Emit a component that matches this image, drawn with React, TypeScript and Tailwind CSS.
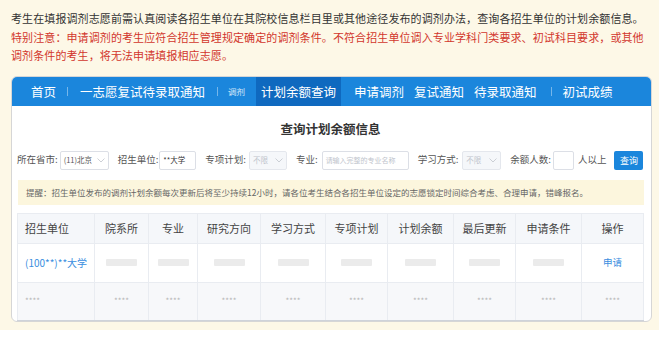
import React from "react";

const font = { fontFamily: '"Noto Sans CJK SC", "Noto Sans", sans-serif' };

function Chevron() {
  return (
    <svg width="8" height="5" viewBox="0 0 8 5" className="ml-auto">
      <path d="M0.5 0.5 L4 4 L7.5 0.5" fill="none" stroke="#c0c4cc" strokeWidth="0.8" />
    </svg>
  );
}

function Sep({ cls }: { cls: string }) {
  return <span className={`block w-px h-[9px] bg-white/40 ${cls}`} />;
}

const cols = [77, 54, 49, 63, 65, 62, 66, 62, 66, 62];
const heads = ["招生单位", "院系所", "专业", "研究方向", "学习方式", "专项计划", "计划余额", "最后更新", "申请条件", "操作"];

export default function App() {
  return (
    <div style={font} className="w-[659px] h-[341px] bg-white">
      <div className="h-[330px] bg-[#fdf8e7] pl-[11px] pr-[7px] pt-[9px]">
        <div className="text-[11px] leading-[18.5px] tracking-[0.1px]">
          <div className="text-[#333]">考生在填报调剂志愿前需认真阅读各招生单位在其院校信息栏目里或其他途径发布的调剂办法，查询各招生单位的计划余额信息。</div>
          <div className="text-[#d2362c]">特别注意：申请调剂的考生应符合招生管理规定确定的调剂条件。不符合招生单位调入专业学科门类要求、初试科目要求，或其他</div>
          <div className="text-[#d2362c]">调剂条件的考生，将无法申请填报相应志愿。</div>
        </div>

        <div className="mt-[11px] w-[641px] bg-white border border-[#d6d6d6] rounded-[6px] overflow-hidden">
          <div className="h-[29px] bg-[#1b86dc] flex items-center pl-[19px] text-white text-[12.5px] leading-[29px]">
            <span>首页</span>
            <Sep cls="ml-[11px]" />
            <span className="ml-[12px]">一志愿复试待录取通知</span>
            <Sep cls="ml-[12px]" />
            <span className="ml-[10px] text-[8.5px] text-white/80">调剂</span>
            <span className="ml-[11px] px-[5px] bg-[#0f69bf]">计划余额查询</span>
            <span className="ml-[13px]">申请调剂</span>
            <span className="ml-[10px]">复试通知</span>
            <span className="ml-[10px]">待录取通知</span>
            <Sep cls="ml-[14px]" />
            <span className="ml-[11px]">初试成绩</span>
          </div>

          <div className="pl-[5px] pr-[7px]">
            <div className="mt-[15px] text-center text-[12.5px] leading-[16px] font-bold text-[#333]">查询计划余额信息</div>

            <div className="mt-[14px] h-[19px] flex items-center text-[9.5px] text-[#555] leading-none">
              <span>所在省市:</span>
              <div className="ml-[2px] w-[49px] h-[19px] border border-[#dcdfe6] rounded-[2px] flex items-center px-[3px] text-[7.5px] text-[#555]">
                <span>(11)北京</span>
                <Chevron />
              </div>
              <span className="ml-[9px]">招生单位:</span>
              <div className="ml-[1px] w-[37px] h-[19px] border border-[#dcdfe6] rounded-[2px] flex items-center px-[3px] text-[7.5px] text-[#333]">**大学</div>
              <span className="ml-[9px]">专项计划:</span>
              <div className="ml-[3px] w-[38px] h-[19px] border border-[#e4e7ed] bg-[#f5f7fa] rounded-[2px] flex items-center px-[3px] text-[7.5px] text-[#c0c4cc]">
                <span>不限</span>
                <Chevron />
              </div>
              <span className="ml-[9px]">专业:</span>
              <div className="ml-[4px] w-[87px] h-[19px] border border-[#dcdfe6] rounded-[2px] flex items-center px-[3px] text-[7px] text-[#c0c4cc] whitespace-nowrap overflow-hidden">请输入完整的专业名称</div>
              <span className="ml-[9px]">学习方式:</span>
              <div className="ml-[4px] w-[39px] h-[19px] border border-[#e4e7ed] bg-[#f5f7fa] rounded-[2px] flex items-center px-[3px] text-[7.5px] text-[#c0c4cc]">
                <span>不限</span>
                <Chevron />
              </div>
              <span className="ml-[9px]">余额人数:</span>
              <div className="ml-[2px] w-[21px] h-[19px] border border-[#dcdfe6] rounded-[2px]" />
              <span className="ml-[4px]">人以上</span>
              <div className="ml-[8px] w-[29px] h-[19px] bg-[#1b86dc] rounded-[2px] text-white text-[9px] flex items-center justify-center">查询</div>
            </div>

            <div className="mt-[10px] ml-[1px] h-[25px] bg-[#fcf6dd] flex items-center pl-[8px] text-[8.5px] text-[#666] whitespace-nowrap">
              提醒：招生单位发布的调剂计划余额每次更新后将至少持续12小时，请各位考生结合各招生单位设定的志愿锁定时间综合考虑、合理申请，错峰报名。
            </div>

            <table className="mt-[8px] table-fixed border-collapse w-[626px]">
              <colgroup>
                {cols.map((w, i) => (
                  <col key={i} style={{ width: w }} />
                ))}
              </colgroup>
              <thead>
                <tr className="h-[30px] bg-[#f5f7fa]">
                  {heads.map((h, i) => (
                    <th
                      key={i}
                      className={`border border-[#e9ecf1] text-[11px] font-normal text-[#444] ${i === 0 ? "text-left pl-[7px]" : "text-center"}`}
                    >
                      {h}
                    </th>
                  ))}
                </tr>
              </thead>
              <tbody>
                <tr className="h-[39px] bg-white">
                  <td className="border border-[#e9ecf1] pl-[7px] text-[10px] text-[#3a8ee0] whitespace-nowrap">(100**)**大学</td>
                  {cols.slice(1, 9).map((_, i) => (
                    <td key={i} className="border border-[#e9ecf1]">
                      <div className="mx-auto w-[31px] h-[7px] bg-[#ebebeb] rounded-[1px] blur-[0.5px]" />
                    </td>
                  ))}
                  <td className="border border-[#e9ecf1] text-center text-[9.5px] text-[#3a8ee0]">申请</td>
                </tr>
                <tr className="h-[38px] bg-[#f7f8fa]">
                  {heads.map((_, i) => (
                    <td
                      key={i}
                      className={`border border-[#e9ecf1] border-b-[#cfd3da] text-[8px] text-[#b5b5b5] ${i === 0 ? "text-left pl-[7px]" : "text-center"}`}
                    >
                      ****
                    </td>
                  ))}
                </tr>
              </tbody>
            </table>
          </div>
        </div>
      </div>
    </div>
  );
}
